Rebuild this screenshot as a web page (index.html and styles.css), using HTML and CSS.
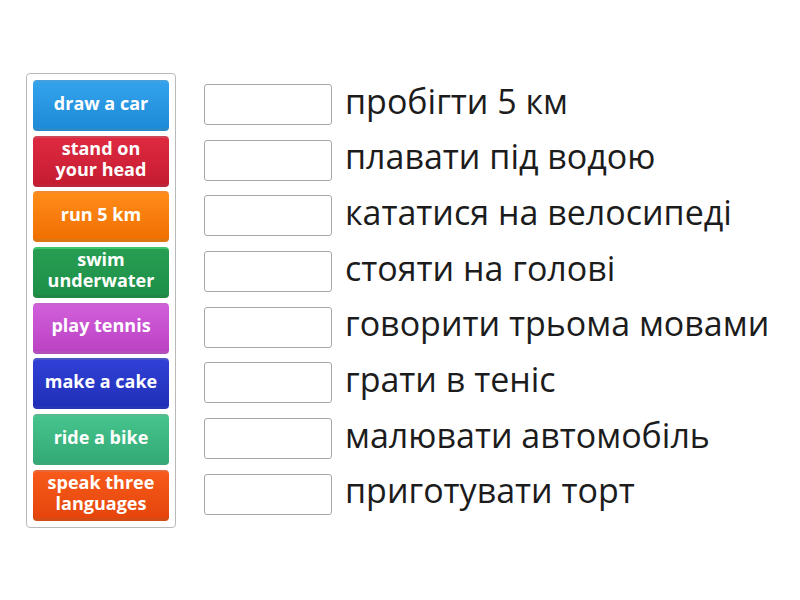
FILE: index.html
```html
<!DOCTYPE html>
<html>
<head>
<meta charset="utf-8">
<link rel="stylesheet" href="styles.css">
</head>
<body>
<div class="stage">
  <div class="bank">
    <div class="tile c-blue">draw a car</div>
    <div class="tile c-red">stand on your head</div>
    <div class="tile c-orange">run 5 km</div>
    <div class="tile c-green">swim underwater</div>
    <div class="tile c-pink">play tennis</div>
    <div class="tile c-navy">make a cake</div>
    <div class="tile c-teal">ride a bike</div>
    <div class="tile c-flame">speak three languages</div>
  </div>
  <div class="rows">
    <div class="row"><div class="blank"></div><span class="label">пробігти 5 км</span></div>
    <div class="row"><div class="blank"></div><span class="label">плавати під водою</span></div>
    <div class="row"><div class="blank"></div><span class="label">кататися на велосипеді</span></div>
    <div class="row"><div class="blank"></div><span class="label">стояти на голові</span></div>
    <div class="row"><div class="blank"></div><span class="label">говорити трьома мовами</span></div>
    <div class="row"><div class="blank"></div><span class="label">грати в теніс</span></div>
    <div class="row"><div class="blank"></div><span class="label">малювати автомобіль</span></div>
    <div class="row"><div class="blank"></div><span class="label">приготувати торт</span></div>
  </div>
</div>
</body>
</html>
```
FILE: styles.css
```css
html, body {
  margin: 0;
  padding: 0;
  background: #fff;
  font-family: "Open Sans", "Liberation Sans", sans-serif;
}
.stage {
  display: flex;
  align-items: flex-start;
  padding: 73px 0 0 26px;
}
.bank {
  display: flex;
  flex-direction: column;
  gap: 4.7px;
  padding: 6px;
  border: 1px solid #b9b9b9;
  border-radius: 4px;
  width: 136px;
}
.tile {
  height: 51px;
  box-sizing: border-box;
  border-radius: 4px;
  display: flex;
  align-items: center;
  justify-content: center;
  text-align: center;
  color: #fff;
  font-weight: 700;
  font-size: 18px;
  line-height: 21px;
  padding: 0 10px 4px;
  border-top: 2px solid rgba(255,255,255,0.18);
  border-bottom: 3px solid rgba(0,0,0,0.14);
}
.c-blue { background: linear-gradient(#34a3ec, #1e8ad8); }
.c-red { background: linear-gradient(#de2a40, #c51c32); }
.c-orange { background: linear-gradient(#ff8c1a, #f07000); }
.c-green { background: linear-gradient(#279e52, #1e8f48); border-top-color: #3ec66d; }
.c-pink { background: linear-gradient(#d25fda, #bb42c4); }
.c-navy { background: linear-gradient(#2f40d6, #2130b8); }
.c-teal { background: linear-gradient(#46c48e, #34aa76); }
.c-flame { background: linear-gradient(#f75a1a, #e5450b); padding: 0 4px 4px; }
.rows {
  display: flex;
  flex-direction: column;
  gap: 14.7px;
  margin-left: 28px;
  padding-top: 11px;
}
.row {
  display: flex;
  align-items: center;
  height: 41px;
}
.blank {
  width: 126px;
  height: 39px;
  border: 1px solid #a8a8a8;
  border-radius: 3px;
  background: #fff;
  flex: none;
}
.label {
  margin-left: 13px;
  margin-top: -7px;
  font-size: 34px;
  color: #1c1c1c;
  white-space: nowrap;
  line-height: 41px;
}
```
